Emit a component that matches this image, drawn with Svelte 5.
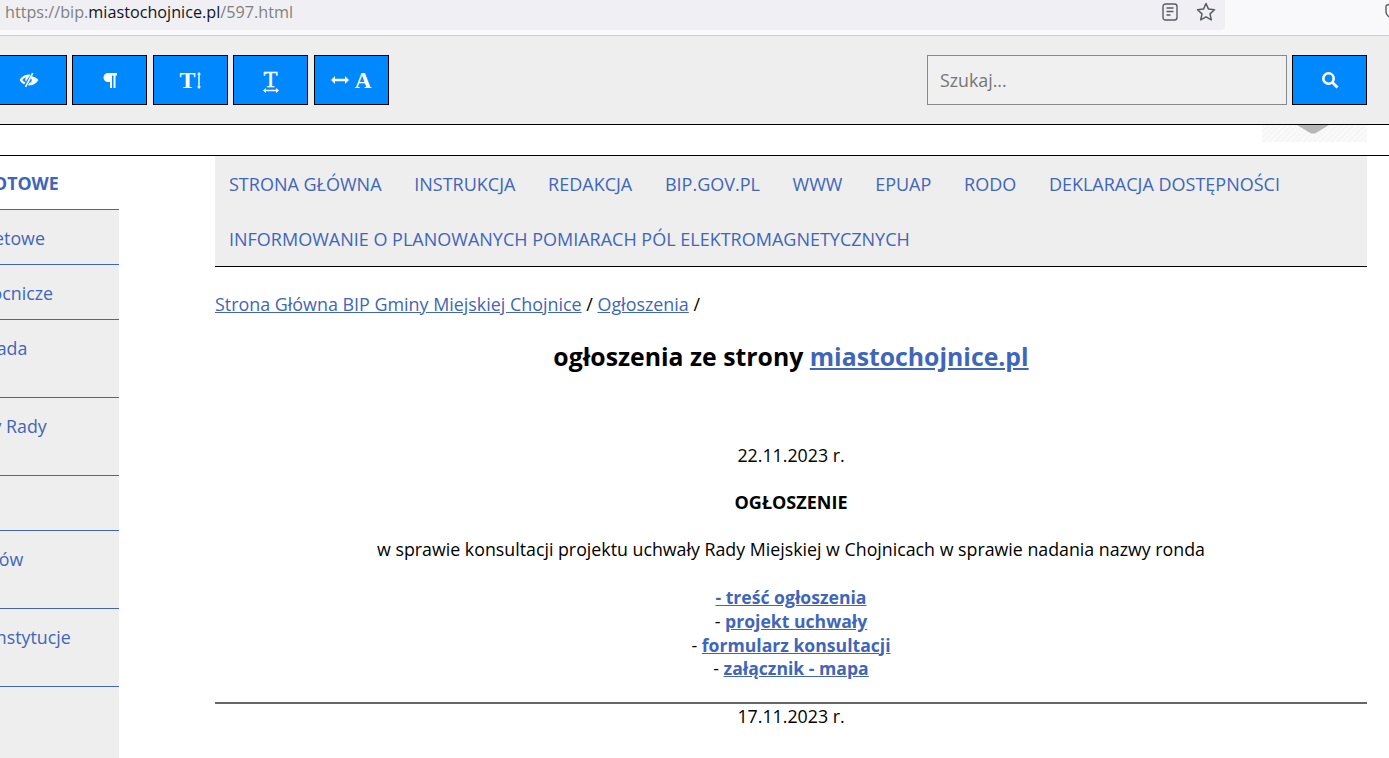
<script>
  const sideItems = [
    { text: "Sprawy budżetowe", shift: -112, lines: 1 },
    { text: "Jednostki pomocnicze", shift: -127, lines: 1 },
    { text: "Burmistrz i Rada", shift: -109, lines: 2 },
    { text: "Uchwały Rady", shift: -68, lines: 2 },
    { text: "Majątek", shift: -90, lines: 1 },
    { text: "Rejestr zbiorów", shift: -105, lines: 2 },
    { text: "Gminne instytucje", shift: -79, lines: 2 },
  ];
  const navItems = [
    "STRONA GŁÓWNA",
    "INSTRUKCJA",
    "REDAKCJA",
    "BIP.GOV.PL",
    "WWW",
    "EPUAP",
    "RODO",
    "DEKLARACJA DOSTĘPNOŚCI",
    "INFORMOWANIE O PLANOWANYCH POMIARACH PÓL ELEKTROMAGNETYCZNYCH",
  ];
</script>

<div class="page">
  <div class="browser">
    <div class="urlbar">
      <span class="url"><span class="dim">https://bip.</span>miastochojnice.pl<span class="dim">/597.html</span></span>
      <svg class="reader" width="16" height="18" viewBox="0 0 16 18" fill="none" stroke="#5b5b66" stroke-width="1.4">
        <rect x="1" y="1" width="14" height="16" rx="2.5" />
        <path d="M4.5 5h7M4.5 8.5h7M4.5 12h4" />
      </svg>
      <svg class="star" width="20" height="20" viewBox="0 0 20 20" fill="none" stroke="#5b5b66" stroke-width="1.5" stroke-linejoin="round">
        <path d="M10 1.5l2.5 5.6 6 .7-4.5 4.1 1.3 6L10 14.8l-5.3 3.1 1.3-6L1.5 7.8l6-.7z" />
      </svg>
    </div>
    <svg class="shield" width="10" height="18" viewBox="0 0 10 18" fill="none" stroke="#5b5b66" stroke-width="1.4">
      <path d="M1 2.5Q5 1 9 1M1 2.5v6q0 5 8 8" />
    </svg>
  </div>

  <div class="toolbar">
    <button class="tool" aria-label="kontrast">
      <svg width="20" height="16" viewBox="0 0 20 16" fill="#fff">
        <path d="M10 2.5C5.5 2.5 2.2 5.3.6 8c1 1.7 2.5 3.3 4.5 4.3l1.3-1.900C5 9.8 4 8.900 3.200 8 4.200 6.900 5.500 5.900 7 5.300 6.500 6 6.200 7 6.300 8c0 .7.2 1.300.5 1.800L11.200 3.100C10.800 2.600 10.400 2.500 10 2.500z" />
        <path d="M14.400 1.500L13 .7 5.800 14.500l1.400.8z" />
        <path d="M13 4.300l-1.200 2c.9.7 1.200 2 .6 3.100-.4.8-1.200 1.300-2 1.400L9 13.300c.3 0 .7.1 1 .1 4.500 0 7.800-2.700 9.400-5.400-1.300-1.700-3.600-3-6.400-3.700z" />
      </svg>
    </button>
    <button class="tool" aria-label="akapit">
      <svg width="14" height="15" viewBox="0 0 14 15" fill="#fff">
        <path d="M5 0H14V2.500H12.500V15H10.500V2.500H9V15H7V9H5A4.500 4.500 0 0 1 5 0z" />
      </svg>
    </button>
    <button class="tool glyph tall">
      T<svg class="ml" width="4" height="17" viewBox="0 0 4 17" fill="#fff"><path d="M2 0l2 2.500H2.700v12H4L2 17 0 14.500h1.300v-12H0z" /></svg>
    </button>
    <button class="tool glyph stack">
      <span class="t">T</span>
      <svg width="16" height="5" viewBox="0 0 16 5" fill="#fff"><path d="M0 2.500L3 0v1.800h10V0l3 2.500L13 5V3.200H3V5z" /></svg>
    </button>
    <button class="tool glyph wide">
      <svg class="mr" width="18" height="8" viewBox="0 0 18 8" fill="#fff"><path d="M0 4L4 0v2.800h10V0l4 4-4 4V5.200H4V8z" /></svg>A
    </button>
    <div class="search">
      <input type="text" placeholder="Szukaj..." />
      <button class="tool" aria-label="Szukaj">
        <svg width="18" height="18" viewBox="0 0 18 18" fill="none" stroke="#fff">
          <circle cx="7.500" cy="7.500" r="5.200" stroke-width="2.600" />
          <path d="M11.500 11.500l5 5" stroke-width="2.800" />
        </svg>
      </button>
    </div>
  </div>

  <div class="strip">
    <div class="logo">
      <svg width="32" height="9" viewBox="0 0 32 9"><path d="M0 0h32L18 8.500h-4z" fill="#b5b8b5" /></svg>
    </div>
  </div>

  <div class="columns">
    <aside class="side">
      <div class="side-title">PRZEDMIOTOWE</div>
      <ul>
        {#each sideItems as item}
          <li class:double={item.lines === 2}>
            <a href="#top" style="margin-left: {item.shift}px">{item.text}</a>
          </li>
        {/each}
      </ul>
    </aside>

    <main>
      <nav>
        {#each navItems as item}
          <a href="#top">{item}</a>
        {/each}
      </nav>

      <p class="crumbs">
        <a href="#top">Strona Główna BIP Gminy Miejskiej Chojnice</a> / <a href="#top">Ogłoszenia</a> /
      </p>

      <h1>ogłoszenia ze strony <a href="#top">miastochojnice.pl</a></h1>

      <article>
        <p>22.11.2023 r.</p>
        <p><strong>OGŁOSZENIE</strong></p>
        <p>w sprawie konsultacji projektu uchwały Rady Miejskiej w Chojnicach w sprawie nadania nazwy ronda</p>
        <p class="files">
          <a href="#top">- treść ogłoszenia</a><br />
          - <a href="#top">projekt uchwały</a><br />
          - <a href="#top">formularz konsultacji</a><br />
          - <a href="#top">załącznik - mapa</a>
        </p>
      </article>
      <hr />
      <p class="next">17.11.2023 r.</p>
    </main>
  </div>
</div>

<style>
  :global(body) {
    background: #fff;
  }

  .page {
    height: 758px;
    overflow: hidden;
    font-family: "Open Sans", "Noto Sans", sans-serif;
    font-size: 17.8px;
    color: #000;
  }

  a {
    color: #3f66b8;
  }

  .browser {
    height: 35px;
    background: #f9f9fb;
    border-bottom: 1px solid #ccc;
    display: flex;
    justify-content: space-between;
    box-sizing: content-box;
  }

  .urlbar {
    width: 1225px;
    height: 30px;
    background: #f0f0f4;
    border-bottom-right-radius: 4px;
    display: flex;
    align-items: center;
    padding: 0 9px 6px 5px;
    box-sizing: border-box;
  }

  .url {
    flex: 1;
    font-size: 16.2px;
    color: #15141a;
    white-space: nowrap;
  }

  .dim {
    color: #808080;
  }

  .reader {
    margin-right: 18px;
  }

  .shield {
    margin: 3px -6px 0 0;
  }

  .toolbar {
    height: 88px;
    background: #eee;
    border-bottom: 1px solid #000;
    display: flex;
    align-items: center;
    gap: 5.5px;
    margin-left: -8.5px;
    padding-right: 22px;
    box-sizing: content-box;
  }

  .tool {
    width: 75px;
    height: 50px;
    background: #0088ff;
    border: 1px solid #000;
    padding: 0;
    color: #fff;
    display: flex;
    align-items: center;
    justify-content: center;
    flex: none;
  }

  .glyph {
    font-family: "Liberation Serif", serif;
    font-weight: bold;
    font-size: 22px;
    line-height: 1;
  }

  .tall {
    font-size: 24px;
  }

  .wide {
    font-size: 23px;
  }

  .ml {
    margin-left: 1px;
  }

  .mr {
    margin-right: 6px;
  }

  .stack {
    flex-direction: column;
    font-size: 23px;
    font-weight: normal;
    -webkit-text-stroke: 0.4px #fff;
  }

  .stack .t {
    height: 20px;
  }

  .search {
    margin-left: auto;
    display: flex;
    gap: 5px;
  }

  input {
    width: 360px;
    height: 50px;
    box-sizing: border-box;
    background: #f0f0f0;
    border: 1px solid #888;
    padding: 0 12px;
    font: inherit;
    color: #000;
    outline: none;
  }

  input::placeholder {
    color: #757575;
    opacity: 1;
  }

  .strip {
    height: 30px;
    border-bottom: 1px solid #000;
    display: flex;
    justify-content: flex-end;
    padding-right: 22px;
  }

  .logo {
    width: 105px;
    height: 17px;
    background: repeating-linear-gradient(135deg, #f6f6f6 0 2px, #fafafa 2px 4px);
    padding-left: 35px;
    box-sizing: border-box;
    line-height: 0;
  }

  .columns {
    display: flex;
    gap: 96px;
    padding-right: 22px;
  }

  .side {
    width: 119px;
    flex: none;
    overflow: hidden;
    height: 602px;
  }

  .side-title {
    height: 53px;
    margin-left: -86px;
    padding-top: 15px;
    box-sizing: border-box;
    font-weight: bold;
    color: #3f66b8;
    white-space: nowrap;
  }

  ul {
    list-style: none;
    margin: 0;
    padding: 0;
    background: #eee;
    height: 549px;
    border-top: 1px solid #3f66b8;
  }

  li {
    height: 55px;
    box-sizing: border-box;
    padding-top: 17px;
    border-bottom: 1px solid #3f66b8;
    white-space: nowrap;
  }

  li.double {
    height: 78px;
  }

  li a {
    text-decoration: none;
    display: block;
    line-height: 23px;
  }

  main {
    flex: 1;
    min-width: 0;
    text-align: center;
  }

  nav {
    background: #eee;
    border-bottom: 1px solid #000;
    display: flex;
    flex-wrap: wrap;
    column-gap: 32.7px;
    padding: 0 14px;
    height: 111px;
    box-sizing: border-box;
    text-align: left;
    font-size: 18px;
  }

  nav a {
    height: 55px;
    line-height: 57px;
    text-decoration: none;
    white-space: nowrap;
  }

  .crumbs {
    margin: 25px 0 0;
    text-align: left;
    line-height: 24px;
    font-size: 17.9px;
  }

  h1 {
    margin: 24px 0 0;
    font-size: 24.8px;
    line-height: 32px;
    font-weight: bold;
  }

  article {
    margin-top: 72px;
    line-height: 23.7px;
  }

  article p {
    margin: 0 0 23.4px;
  }

  article p.files {
    margin: 24.4px 0 21.4px;
  }

  strong,
  .files a {
    font-size: 18px;
    font-weight: bold;
  }

  .files a {
    font-size: 17.6px;
  }

  hr {
    margin: 0;
    height: 2px;
    background: #666;
    border: none;
  }

  .next {
    margin: 1px 0 0;
    line-height: 23.7px;
  }
</style>
